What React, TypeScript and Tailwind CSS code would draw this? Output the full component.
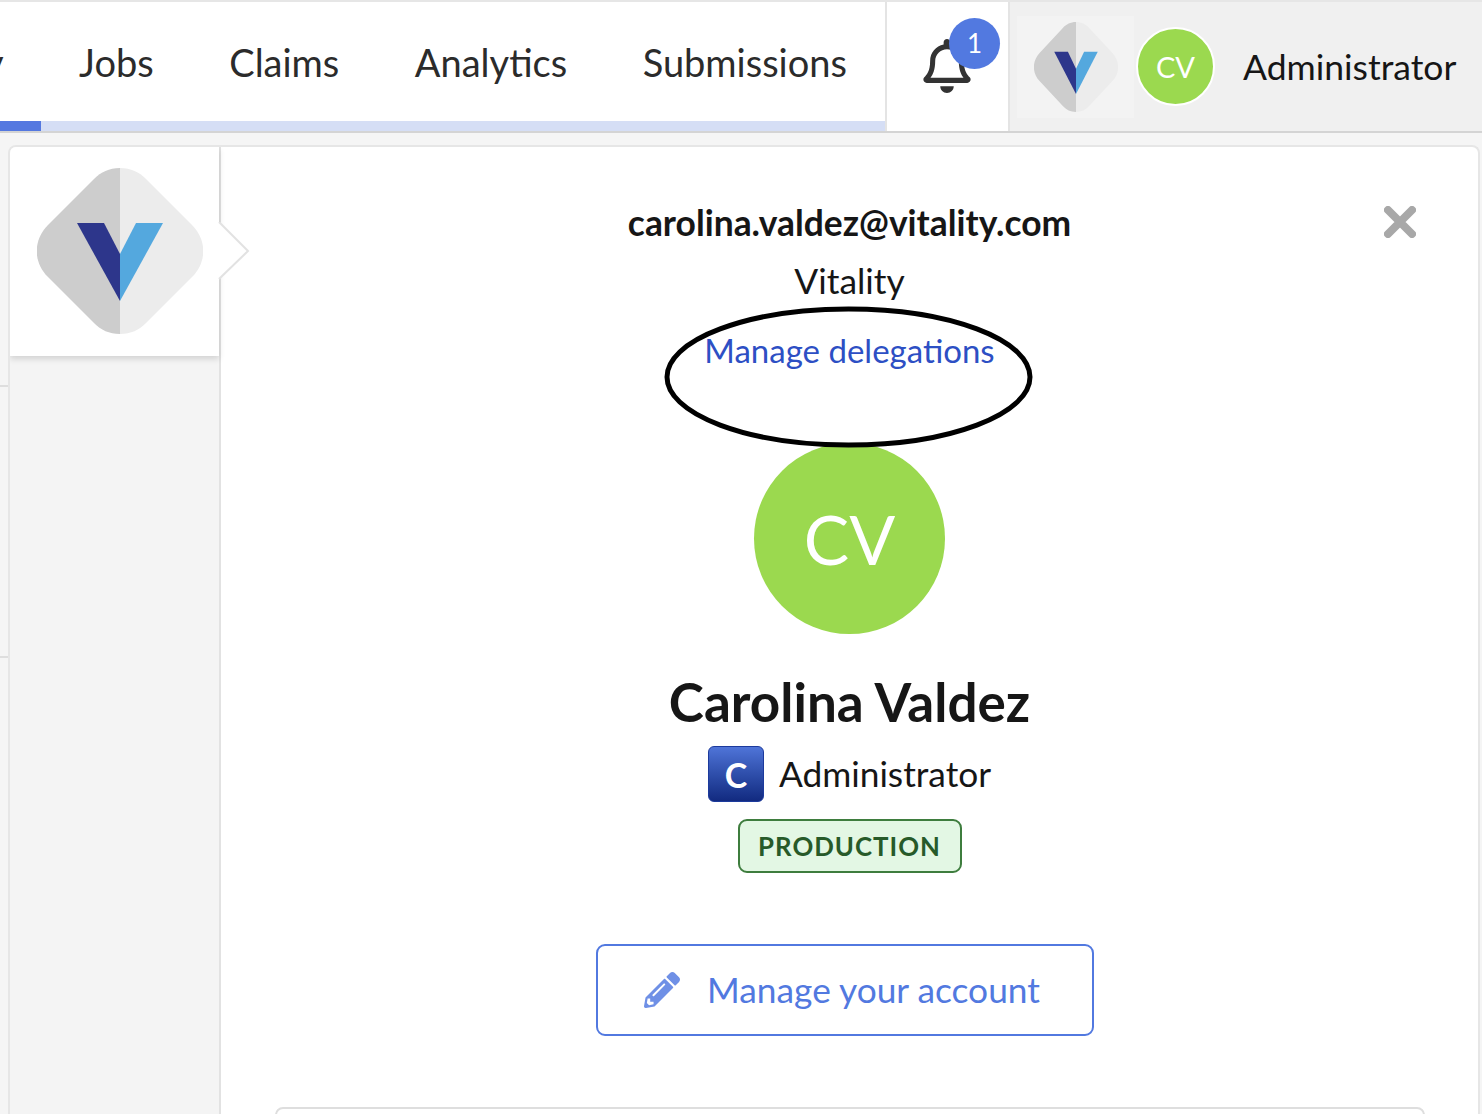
import { FaPencilAlt, FaRegBell } from "react-icons/fa";

const navItems = ["Jobs", "Claims", "Analytics", "Submissions"];

function VitalityLogo({ className }: { className?: string }) {
  return (
    <svg viewBox="0 0 166 166" preserveAspectRatio="none" className={className}>
      <path d="M83 0 C72 0 64 4 57 11 L11 57 C-4 72 -4 94 11 109 L57 155 C64 162 72 166 83 166 Z" fill="#cdcdcd" />
      <path d="M83 0 C94 0 102 4 109 11 L155 57 C170 72 170 94 155 109 L109 155 C102 162 94 166 83 166 Z" fill="#ececec" />
      <path d="M40 55 L67 55 L83 86 L83 133 Z" fill="#2d368b" />
      <path d="M83 86 L99 55 L126 55 L83 133 Z" fill="#54a8de" />
    </svg>
  );
}

export default function App() {
  return (
    <div className="relative h-[1114px] w-[1482px] overflow-hidden bg-[#f5f5f5] font-['Lato',sans-serif] text-[#161616]">
      <header className="flex h-[133px] border-t-2 border-b-2 border-t-[#e6e6e6] border-b-[#d4d4d4]">
        <nav className="flex w-[885px] flex-col overflow-hidden bg-white">
          <div className="flex flex-1 items-center gap-[75.500px] pt-[2px] text-[38px] text-[#2b2b2b]">
            <span className="-ml-[16px]">y</span>
            {navItems.map((item) => (
              <span key={item}>{item}</span>
            ))}
          </div>
          <div className="h-[10px] bg-[#d5def5]">
            <div className="h-full w-[41px] bg-[#5478e0]" />
          </div>
        </nav>
        <div className="relative flex w-[125px] items-center border-x-2 border-[#e4e4e4] bg-white pb-[1px] pl-[35px]">
          <FaRegBell className="h-[54px] w-[50px] text-[#333]" />
          <span className="absolute top-[16px] left-[62px] flex size-[51px] items-center justify-center rounded-full bg-[#5279e0] text-[26px] text-white">
            1
          </span>
        </div>
        <div className="flex flex-1 items-center bg-[#f0f0f0] pl-[7px]">
          <div className="flex h-[102px] w-[117px] items-center justify-center bg-[#f3f3f3]">
            <VitalityLogo className="h-[90px] w-[84px]" />
          </div>
          <div className="ml-[2px] flex size-[79px] items-center justify-center rounded-full border-2 border-white bg-[#9bd94f] text-[29px] text-white">
            CV
          </div>
          <span className="ml-[28px] pt-[1px] text-[35.500px]">Administrator</span>
        </div>
      </header>

      <div className="mt-[12px] ml-[8px] flex h-[980px] w-[1472px] overflow-hidden rounded-t-[8px] border-t-2 border-r-2 border-l-2 border-[#e6e6e6] bg-white">
        <aside className="w-[211px] shrink-0 border-r-2 border-[#e2e2e2] bg-[#f4f4f4]">
          <div className="flex h-[209px] items-center justify-center bg-white pb-[2px] pl-[10px] shadow-[0_3px_6px_rgba(0,0,0,0.14)]">
            <VitalityLogo className="size-[166px]" />
          </div>
        </aside>

        <main className="relative flex flex-1 flex-col items-center *:shrink-0">
          <svg viewBox="0 0 32 32" className="absolute top-[59px] left-[1163px] size-[32px]">
            <path d="M4 4 L28 28 M28 4 L4 28" stroke="#a8a8a8" strokeWidth="8" strokeLinecap="round" />
          </svg>
          <p className="mt-[53px] text-[35.400px] leading-[46px] font-bold">carolina.valdez@vitality.com</p>
          <p className="mt-[12px] text-[35.400px] leading-[46px]">Vitality</p>
          <a className="mt-[23px] text-[33px] leading-[46px] text-[#2d4fc4]">Manage delegations</a>
          <div className="mt-[70px] flex size-[191px] items-center justify-center rounded-full bg-[#9bd94f] text-[68px] text-white">
            CV
          </div>
          <h1 className="mt-[37px] text-[53px] leading-[62px] font-bold">Carolina Valdez</h1>
          <div className="mt-[13px] flex items-center gap-[15px]">
            <span className="flex size-[56px] items-center justify-center rounded-[6px] border border-[#1c3a9c] bg-gradient-to-b from-[#4f74d8] to-[#122a80] text-[34px] font-bold text-white">
              C
            </span>
            <span className="text-[35.300px] leading-[56px]">Administrator</span>
          </div>
          <span className="mt-[17px] flex h-[54px] w-[224px] items-center justify-center rounded-[9px] border-2 border-[#3e7d3e] bg-[#e3f7e4] text-[25.800px] font-bold tracking-[1px] text-[#275a29]">
            PRODUCTION
          </span>
          <a className="mt-[71px] mr-[9px] flex h-[92px] w-[498px] items-center justify-center gap-[27px] rounded-[9px] border-2 border-[#5279e0] pr-[6px] text-[35.300px] text-[#5279e0]">
            <FaPencilAlt className="size-[36px] text-[#6f90e6]" />
            Manage your account
          </a>
          <div className="mt-[71px] h-[20px] w-[1150px] rounded-t-[8px] border-2 border-[#dedede]" />
        </main>
      </div>

      <div className="absolute top-[385px] left-0 h-[2px] w-[8px] bg-[#dedede]" />
      <div className="absolute top-[656px] left-0 h-[2px] w-[8px] bg-[#dedede]" />

      {/* pointer from the logo tile into the panel */}
      <svg viewBox="0 0 32 58" className="absolute top-[222px] left-[218px] h-[58px] w-[32px]">
        <path d="M1 0 L30 29 L1 57" fill="#fff" stroke="#e2e2e2" strokeWidth="2" />
      </svg>

      {/* hand drawn annotation */}
      <svg viewBox="0 0 370 142" className="absolute top-[306px] left-[664px] h-[142px] w-[370px]">
        <ellipse cx="184.500" cy="71" rx="181.500" ry="68" fill="none" stroke="#000" strokeWidth="5" />
      </svg>
    </div>
  );
}
